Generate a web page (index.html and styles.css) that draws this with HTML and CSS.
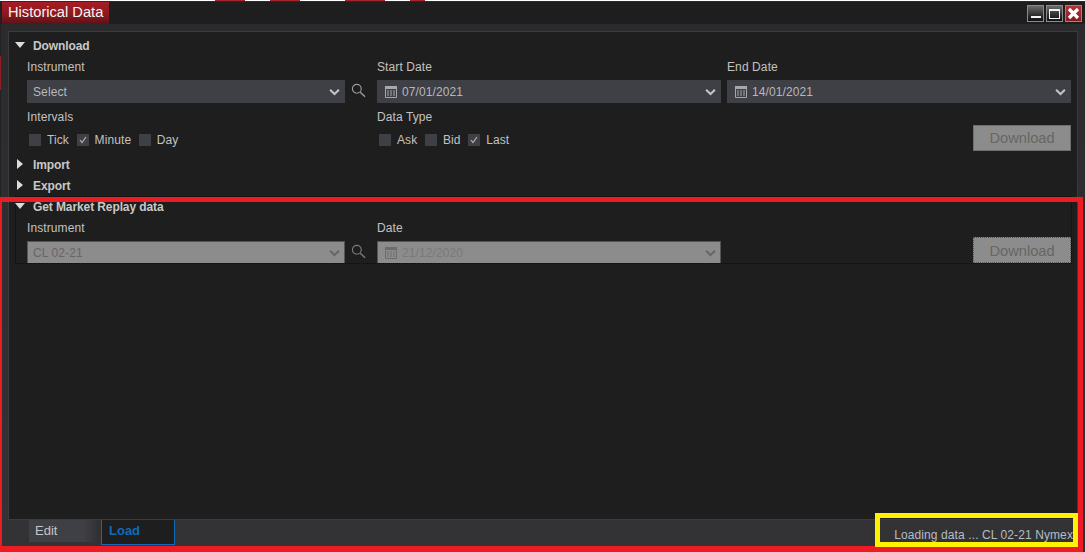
FILE: index.html
```html
<!DOCTYPE html>
<html lang="en">
<head>
<meta charset="utf-8">
<title>Historical Data</title>
<link rel="stylesheet" href="styles.css">
</head>
<body>
<svg class="defs" width="0" height="0" aria-hidden="true">
  <defs>
    <symbol id="chev" viewBox="0 0 12 8"><path d="M1.2 1.500 6 6.200l4.800-4.700" fill="none" stroke="currentColor" stroke-width="2.200"/></symbol>
    <symbol id="search" viewBox="0 0 16 16"><circle cx="6.200" cy="6.200" r="4.700" fill="none" stroke="currentColor" stroke-width="1.200"/><path d="M9.800 9.800 15 14.600" fill="none" stroke="currentColor" stroke-width="1.500"/></symbol>
    <symbol id="cal" viewBox="0 0 12 12"><path d="M.5 .5h11v11H.5z" fill="none" stroke="currentColor"/><path d="M0 0h12v3H0zM2 4.500h2v1H2zM5 4.500h2v1H5zM8 4.500h2v1H8zM2 6.500h2v1H2zM5 6.500h2v1H5zM8 6.500h2v1H8zM2 8.500h2v1H2zM5 8.500h2v1H5zM8 8.500h2v1H8z" fill="currentColor"/></symbol>
    <symbol id="down" viewBox="0 0 10 6"><path d="M0 0h10L5 6z" fill="currentColor"/></symbol>
    <symbol id="right" viewBox="0 0 6 10"><path d="M0 0l6 5-6 5z" fill="currentColor"/></symbol>
  </defs>
</svg>
<div class="window">
  <header class="titlebar">
    <div class="title">Historical Data</div>
    <div class="winbtns">
      <div class="winbtn"><span class="glyph-min"></span></div>
      <div class="winbtn"><span class="glyph-max"></span></div>
      <div class="winbtn close"><svg width="13" height="13" viewBox="0 0 13 13"><path d="M2 2l9 9M11 2l-9 9" stroke="#fff" stroke-width="3.200"/></svg></div>
    </div>
  </header>
  <div class="frame">
    <main class="panel">
      <section class="section main-section">
        <div class="head"><svg class="tri-down" width="10" height="6"><use href="#down"/></svg>Download</div>
        <div class="grid">
          <div class="field">
            <div class="label">Instrument</div>
            <div class="with-search">
              <div class="select narrow"><span class="value">Select</span><svg class="chev" width="11" height="8"><use href="#chev"/></svg></div>
              <svg class="search" width="15" height="15"><use href="#search"/></svg>
            </div>
          </div>
          <div class="field">
            <div class="label">Start Date</div>
            <div class="select date"><svg class="cal" width="12" height="12"><use href="#cal"/></svg><span class="value">07/01/2021</span><svg class="chev" width="11" height="8"><use href="#chev"/></svg></div>
          </div>
          <div class="field">
            <div class="label">End Date</div>
            <div class="select date"><svg class="cal" width="12" height="12"><use href="#cal"/></svg><span class="value">14/01/2021</span><svg class="chev" width="11" height="8"><use href="#chev"/></svg></div>
          </div>
        </div>
        <div class="grid second">
          <div class="field">
            <div class="label">Intervals</div>
            <div class="checks">
              <label class="check"><span class="box"></span>Tick</label>
              <label class="check"><span class="box"><svg width="8" height="8" viewBox="0 0 8 8"><path d="M1 4l2 2.500L7 1" fill="none" stroke="#b4b4b4" stroke-width="1.200"/></svg></span>Minute</label>
              <label class="check"><span class="box"></span>Day</label>
            </div>
          </div>
          <div class="field">
            <div class="label">Data Type</div>
            <div class="checks">
              <label class="check"><span class="box"></span>Ask</label>
              <label class="check"><span class="box"></span>Bid</label>
              <label class="check"><span class="box"><svg width="8" height="8" viewBox="0 0 8 8"><path d="M1 4l2 2.500L7 1" fill="none" stroke="#b4b4b4" stroke-width="1.200"/></svg></span>Last</label>
            </div>
          </div>
          <div class="action"><div class="button">Download</div></div>
        </div>
      </section>
      <section class="section">
        <div class="head"><svg class="tri-right" width="6" height="10"><use href="#right"/></svg>Import</div>
      </section>
      <section class="section">
        <div class="head"><svg class="tri-right" width="6" height="10"><use href="#right"/></svg>Export</div>
      </section>
      <section class="section replay">
        <div class="head"><svg class="tri-down" width="10" height="6"><use href="#down"/></svg>Get Market Replay data</div>
        <div class="grid third">
          <div class="field">
            <div class="label">Instrument</div>
            <div class="with-search">
              <div class="select narrow disabled"><span class="value">CL 02-21</span><svg class="chev" width="11" height="8"><use href="#chev"/></svg></div>
              <svg class="search dim" width="15" height="15"><use href="#search"/></svg>
            </div>
          </div>
          <div class="field">
            <div class="label">Date</div>
            <div class="select date disabled"><svg class="cal" width="12" height="12"><use href="#cal"/></svg><span class="value faint">21/12/2020</span><svg class="chev" width="11" height="8"><use href="#chev"/></svg></div>
          </div>
          <div class="action"><div class="button dotted">Download</div></div>
        </div>
      </section>
    </main>
    <footer class="tabbar">
      <div class="tab edit">Edit</div>
      <div class="tab load">Load</div>
      <div class="status">Loading data ... CL 02-21 Nymex</div>
    </footer>
  </div>
</div>
<div class="mark red"></div>
<div class="mark yellow"></div>
</body>
</html>
```

FILE: styles.css
```css
* { box-sizing: border-box; }
html, body { margin: 0; height: 100%; }
body {
  width: 1085px;
  height: 552px;
  overflow: hidden;
  position: relative;
  padding: 2px 0 0 1px;
  font-family: "Liberation Sans", Arial, sans-serif;
  font-size: 12px;
  letter-spacing: .1px;
  color: #c6c6c6;
  background:
    linear-gradient(90deg, #fff 0 215px, #a8222a 215px 245px, #fff 245px 270px, #a8222a 270px 300px, #fff 300px 345px, #a8222a 345px 385px, #fff 385px 410px, #a8222a 410px 425px, #fff 425px 1085px) top / 100% 1px no-repeat,
    linear-gradient(180deg, #222 0 56px, #8f1d24 56px 90px, #222 90px) left / 1px 100% no-repeat,
    #2a2a2c;
}
.defs { position: absolute; }
.window {
  height: 550px;
  width: 1084px;
  display: flex;
  flex-direction: column;
  background: #1e1e1e;
}
.titlebar {
  height: 22px;
  flex: none;
  display: flex;
  justify-content: space-between;
  align-items: flex-start;
  background: #1e1e1e;
}
.title {
  width: 107px;
  height: 22px;
  margin-left: 1px;
  padding-left: 6px;
  line-height: 21px;
  font-size: 14.67px;
  letter-spacing: 0;
  color: #f4f4f4;
  background: linear-gradient(180deg, #a81c25 0%, #8c191f 55%, #5c1216 100%);
}
.winbtns { display: flex; gap: 2px; padding: 3px 3px 0 0; }
.winbtn {
  width: 17px;
  height: 17px;
  border: 1px solid #8a8a8a;
  background: linear-gradient(180deg, #6c6c6e 0%, #2a2a2c 65%, #111 100%);
  display: flex;
  align-items: center;
  justify-content: center;
}
.glyph-min { display: block; width: 10px; height: 2px; margin-top: 6px; background: #f2f2f2; }
.glyph-max { display: block; width: 11px; height: 10px; border: 1px solid #f2f2f2; border-top-width: 2px; }
.winbtn.close { background: linear-gradient(180deg, #b8333a, #8a1a20); }
.frame {
  flex: 1;
  min-height: 0;
  display: flex;
  flex-direction: column;
  background: linear-gradient(180deg, #2b2b2d, #333335);
  padding: 7px 7px 0 7px;
}
.panel {
  flex: 1;
  min-height: 0;
  background: #1e1e1e;
  border: 1px solid #3b3b3d;
  padding: 3px 5px 0 6px;
}
.section { border: solid transparent; border-width: 0 1px; }
.main-section { padding-bottom: 3px; }
.head {
  height: 21px;
  display: flex;
  align-items: center;
  font-weight: bold;
  letter-spacing: -.1px;
  color: #c8c8c8;
}
.head svg { color: #dcdcdc; flex: none; }
.tri-down { margin: -2px 8px 0 -1px; }
.tri-right { margin: -1px 10px 0 1px; }
.grid {
  display: grid;
  grid-template-columns: 350px 350px 344px;
  padding-left: 11px;
  margin-top: 1px;
}
.grid.second { margin-top: 4px; }
.field { min-width: 0; }
.label { height: 18px; padding-top: 1px; line-height: 18px; margin-bottom: 5px; color: #c2c2c2; }
.with-search { display: flex; align-items: center; gap: 6px; }
.select {
  height: 23px;
  width: 344px;
  display: flex;
  align-items: center;
  padding: 0 5px 0 6px;
  background: #3f3f46;
  color: #b8b8b8;
}
.select.narrow { width: 318px; }
.select .value { flex: 1; }
.select .cal { margin: 1px 5px 0 2px; color: #a4a8ae; }
.chev { flex: none; color: #c4c4c4; }
.search { flex: none; color: #9c9c9c; margin-top: -2px; }
.search.dim { color: #7c7c7c; }
.select.disabled { height: 22px; background: #8c8c8c; color: #666; border: 1px solid #555; border-width: 1px 1px 0 1px; padding: 0 4px 0 5px; }
.select.disabled .chev { color: #666; }
.select.disabled .cal { color: #6c6c6c; }
.select .value.faint { color: #7a7a7a; }
.checks { display: flex; gap: 7.6px; padding: 3px 0 0 2px; height: 21px; }
.check { display: flex; align-items: center; gap: 6px; height: 14px; color: #c2c2c2; }
.box { width: 12px; height: 12px; background: #3f3f46; display: flex; align-items: center; justify-content: center; }
.action { display: flex; align-items: flex-end; justify-content: flex-end; }
.button {
  width: 98px;
  height: 26px;
  line-height: 24px;
  text-align: center;
  font-size: 14.67px;
  letter-spacing: 0;
  color: #666;
  background: #8c8c8c;
  border: 1px solid #6e6e6e;
}
.button.dotted { border-style: dotted; border-color: #555; line-height: 26px; }
.replay { border: 1px dotted #0c0c0c; height: 68px; }
.replay .head { margin-top: -1px; }
.tabbar {
  height: 32px;
  flex: none;
  display: flex;
  align-items: flex-start;
  padding-left: 21px;
}
.tab { width: 72px; height: 22px; line-height: 21px; padding-left: 6px; letter-spacing: 0; }
.tab.edit {
  background: linear-gradient(90deg, #3f3f46 0%, #3f3f46 75%, #2f2f32 100%);
  color: #c6c6c6;
  font-size: 13px;
}
.tab.load {
  width: 74px;
  height: 25px;
  padding-left: 7px;
  line-height: 22px;
  background: #1e1e1e;
  border: 1px solid #0e6cb8;
  border-top: 0;
  color: #0a6cc0;
  font-size: 13px;
  font-weight: bold;
}
.status {
  margin-left: auto;
  padding: 8px 5px 0 0;
  line-height: 14px;
  color: #b4bcc4;
}
.mark { position: absolute; pointer-events: none; }
.mark.red { left: 0; top: 197px; width: 1083px; height: 355px; border: solid #ed1c24; border-width: 5px 5px 6px 2px; }
.mark.yellow { left: 875px; top: 513px; width: 203px; height: 34px; border: 5px solid #fff200; }
```
